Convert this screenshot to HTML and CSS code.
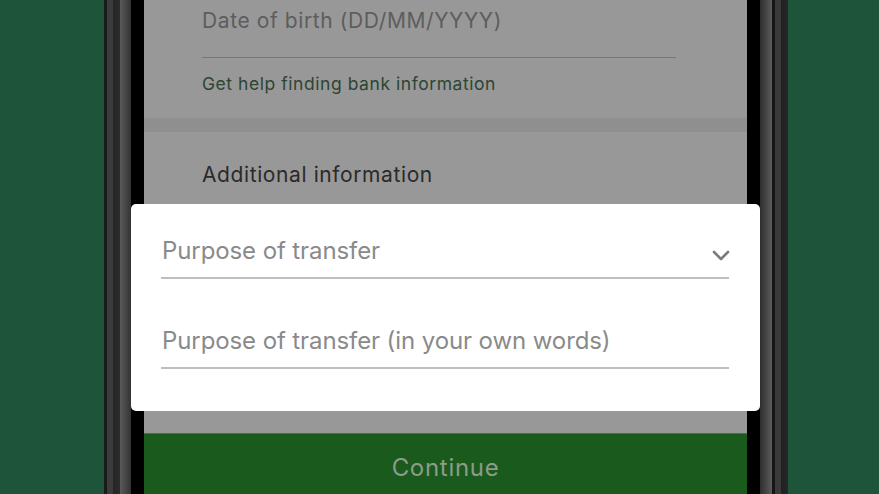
FILE: index.html
```html
<!DOCTYPE html>
<html lang="en">
<head>
<meta charset="utf-8">
<title>Purpose of transfer</title>
<link rel="stylesheet" href="styles.css">
</head>
<body>
<div class="stage">
  <div class="bezel bezel-left"></div>
  <div class="screen">
    <div class="section section-top">
      <div class="field-muted">Date of birth (DD/MM/YYYY)</div>
      <div class="rule"></div>
      <div class="help-link">Get help finding bank information</div>
    </div>
    <div class="band"></div>
    <div class="section section-extra">
      <div class="section-title">Additional information</div>
    </div>
    <div class="continue">Continue</div>
  </div>
  <div class="bezel bezel-right"></div>
  <div class="modal">
    <div class="modal-field">
      <span class="modal-label">Purpose of transfer</span>
      <svg class="chevron" width="18" height="12" viewBox="0 0 18 12"><path d="M2 3 L9 10 L16 3" fill="none" stroke="#7b7b7b" stroke-width="2.6" stroke-linecap="round" stroke-linejoin="round"/></svg>
    </div>
    <div class="modal-field">
      <span class="modal-label">Purpose of transfer (in your own words)</span>
    </div>
  </div>
</div>
</body>
</html>
```
FILE: styles.css
```css
html, body {
  margin: 0;
  padding: 0;
}
body {
  width: 879px;
  height: 494px;
  overflow: hidden;
  background: #1d543a;
  font-family: Inter, "Noto Sans", sans-serif;
}
.stage {
  position: relative;
  display: flex;
  height: 494px;
  padding-left: 104px;
}
.bezel {
  height: 494px;
}
.bezel-left {
  width: 40px;
  background: linear-gradient(to right,
    #1a1a1a 0, #1a1a1a 3px,
    #3b3b3b 3px, #3b3b3b 9px,
    #262626 9px, #2c2c2c 16px,
    #5a5a5a 16px, #333 27px,
    #000 27px, #000 40px);
}
.bezel-right {
  width: 41px;
  background: linear-gradient(to right,
    #000 0, #000 13px,
    #2e2e2e 13px, #5c5c5c 25px,
    #161616 25px, #161616 28px,
    #3a3a3a 28px, #3a3a3a 34px,
    #202020 34px, #262626 41px);
}
.screen {
  width: 603px;
  height: 494px;
  overflow: hidden;
  background: #989898;
  display: flex;
  flex-direction: column;
}
.section, .band, .continue {
  flex-shrink: 0;
}
.section-top {
  height: 118px;
  padding-left: 58px;
  box-sizing: border-box;
}
.field-muted {
  padding-top: 7px;
  font-size: 21px;
  letter-spacing: 0.6px;
  line-height: 28px;
  color: #5d5d5d;
}
.rule {
  margin-top: 22px;
  width: 474px;
  height: 1px;
  background: #777;
}
.help-link {
  margin-top: 15px;
  font-size: 17.5px;
  letter-spacing: 0.55px;
  line-height: 22px;
  color: #2c4535;
}
.band {
  height: 14px;
  background: #8f8f8f;
}
.section-extra {
  height: 301px;
  padding-left: 58px;
  box-sizing: border-box;
}
.section-title {
  padding-top: 29px;
  font-size: 21px;
  letter-spacing: 0.6px;
  line-height: 28px;
  color: #2a2a2a;
}
.continue {
  height: 70px;
  box-sizing: border-box;
  background: #1a5a1c;
  border-top: 1px solid #4d6b4d;
  color: #8c9c8c;
  font-size: 24px;
  letter-spacing: 0.7px;
  text-align: center;
  line-height: 68px;
}
.modal {
  position: absolute;
  left: 131px;
  top: 204px;
  width: 629px;
  height: 207px;
  background: #fff;
  border-radius: 5px;
  box-sizing: border-box;
  padding: 17px 31px 0 30px;
}
.modal-field {
  display: flex;
  align-items: center;
  justify-content: space-between;
  height: 58px;
  border-bottom: 2px solid #bebebe;
  padding-left: 1px;
  padding-top: 2px;
  box-sizing: border-box;
  margin-bottom: 32px;
}
.modal-label {
  font-size: 24px;
  letter-spacing: -0.1px;
  color: #8a8a8a;
}
.chevron {
  margin-right: -1px;
  margin-top: 10px;
}
```
